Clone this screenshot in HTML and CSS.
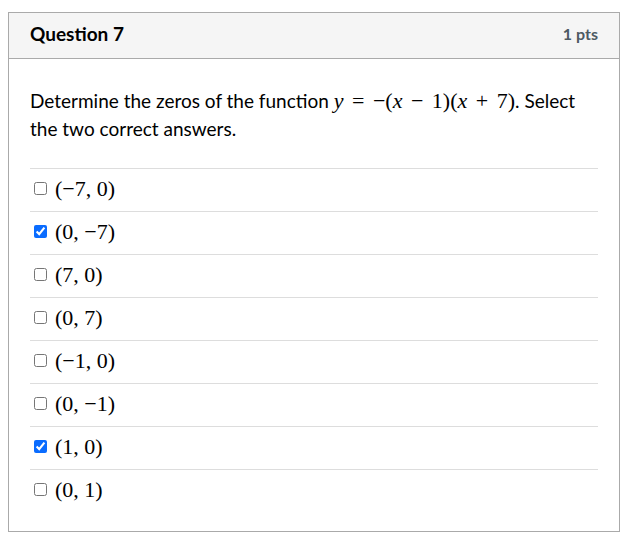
FILE: index.html
```html
<!DOCTYPE html>
<html lang="en">
<head>
    <meta charset="UTF-8">
    <meta name="viewport" content="width=device-width, initial-scale=1.0">
    <title>Question 7</title>
    <link rel="stylesheet" href="styles.css">
</head>
<body>

    <div class="question">
        <div class="question-header">
            <span class="question-title">Question 7</span>
            <span class="question-points">1 pts</span>
        </div>

        <div class="question-body">
            <p class="question-text">
                Determine the zeros of the function <span class="math"><i>y</i><b class="op">=</b>−(<i>x</i><b class="op">−</b>1)(<i>x</i><b class="op">+</b>7)</span>. Select the two correct answers.
            </p>

            <div class="answers">
                <label class="answer"><input type="checkbox"><span class="math">(−7, 0)</span></label>
                <label class="answer"><input type="checkbox" checked><span class="math">(0, −7)</span></label>
                <label class="answer"><input type="checkbox"><span class="math">(7, 0)</span></label>
                <label class="answer"><input type="checkbox"><span class="math">(0, 7)</span></label>
                <label class="answer"><input type="checkbox"><span class="math">(−1, 0)</span></label>
                <label class="answer"><input type="checkbox"><span class="math">(0, −1)</span></label>
                <label class="answer"><input type="checkbox" checked><span class="math">(1, 0)</span></label>
                <label class="answer"><input type="checkbox"><span class="math">(0, 1)</span></label>
            </div>
        </div>
    </div>

</body>
</html>
```

FILE: styles.css
```css
/* Halaman dasar */
body {
    font-family: Lato, "Open Sans", Arial, sans-serif;
    color: #2d3b45;
    background: #ffffff;
    margin: 0;
    padding: 12px 8px;
}

/* Kartu pertanyaan */
.question {
    width: 610px;
    border: 1px solid #aaaaaa;
}

.question-header {
    display: flex;
    justify-content: space-between;
    align-items: center;
    height: 41px;
    padding: 0 21px 4px;
    background: #f5f5f5;
    border-bottom: 1px solid #aaaaaa;
}

.question-title {
    font-size: 19px;
    font-weight: bold;
    color: #000000;
}

.question-points {
    font-size: 16px;
    font-weight: bold;
    color: #4d5a63;
}

.question-body {
    padding: 28px 21px 19px;
}

.question-text {
    margin: 0 0 25px;
    font-size: 19px;
    line-height: 28px;
    color: #000000;
}

/* Teks matematika */
.math {
    font-family: "Liberation Serif", "DejaVu Serif", serif;
    font-size: 22px;
    color: #000000;
    white-space: nowrap;
}

.math i {
    font-style: italic;
}

.math .op {
    font-weight: normal;
    margin: 0 8.5px;
}

/* Pilihan jawaban */
.answer {
    display: flex;
    align-items: center;
    box-sizing: border-box;
    height: 43px;
    padding-bottom: 3px;
    border-top: 1px solid #dddddd;
    gap: 8px;
}

.answer input {
    width: 13px;
    height: 13px;
    margin: 0 0 0 4px;
    accent-color: #0a6cff;
}
```
